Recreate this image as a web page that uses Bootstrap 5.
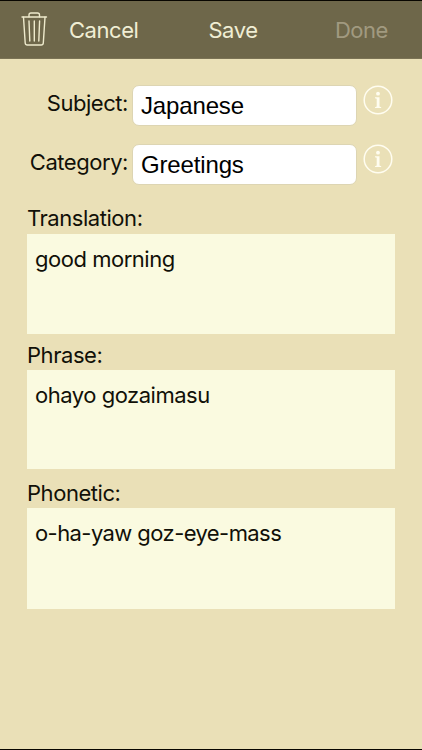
<!DOCTYPE html>
<html lang="en">
<head>
<meta charset="utf-8">
<meta name="viewport" content="width=device-width, initial-scale=1">
<title>Edit Phrase</title>
<link href="https://cdn.jsdelivr.net/npm/bootstrap@5.3.0/dist/css/bootstrap.min.css" rel="stylesheet">
<style>
body{background:#eae0b7;color:#111008;font-family:Inter,"Liberation Sans",sans-serif;font-size:22px;line-height:28px;letter-spacing:-.45px;height:750px;overflow:hidden;border-top:1px solid #080600;border-bottom:1px solid #080600}
.topbar{height:58px;background:#6e674a;border-bottom:1px solid #7b7355;padding:0 34px 0 21px}
.topbar .btn{--bs-btn-color:#f0eed4;--bs-btn-hover-color:#fff;--bs-btn-font-size:22px;--bs-btn-line-height:28px;--bs-btn-padding-x:0;--bs-btn-padding-y:0;--bs-btn-border-width:0;--bs-btn-disabled-color:#a19a80;--bs-btn-disabled-opacity:1;letter-spacing:-.45px}
.trash{width:27px;height:35px}
.b-cancel{margin-left:21px}
.b-save{margin-left:70px}
.b-done{margin-left:auto}
.fields{padding:26px 28px 0 0;gap:18px}
.field-label{width:129px;padding-right:1px;margin-right:3px;margin-top:4px}
.entry.form-control{width:225px;height:41px;border:1px solid #ddd5b3;border-radius:7px;padding:0 8px;font-family:"Liberation Sans",Arial,sans-serif;font-size:24px;line-height:38px;letter-spacing:-.15px;color:#000;background:#fff}
.info{width:30px;height:30px;margin-left:6px}
.notes{padding:19px 27px 0}
.note.form-control{background:#fafae0;color:#111008;font-size:22px;line-height:28px;letter-spacing:-.48px;padding:11px 8px;resize:none;overflow:hidden}
.n1{height:100px;margin-top:2px}
.n2{height:99px;margin-top:1px}
.note.n3{height:101px;margin-top:1px;letter-spacing:-.58px}
.l2{margin-top:7px}
.l3{margin-top:10px}
</style>
</head>
<body>
<nav class="topbar d-flex align-items-center">
  <button class="btn d-flex" type="button" aria-label="Delete">
    <svg class="trash" viewBox="0 0 27 35" fill="none" stroke="#eeeacc" stroke-width="1.4" stroke-linecap="round" stroke-linejoin="round"><path d="M1 5H25.500"/><path d="M8 4.800V3Q8 1 10 1H16.500Q18.500 1 18.500 3V4.800"/><path d="M2.500 5.200L4.200 31Q4.400 33 6.300 33H20.200Q22.100 33 22.300 31L24 5.200"/><path d="M8 9L8.800 29M13.300 9V29M18.600 9L17.800 29"/></svg>
  </button>
  <button class="btn b-cancel" type="button">Cancel</button>
  <button class="btn b-save" type="button">Save</button>
  <button class="btn b-done" type="button" disabled>Done</button>
</nav>
<main>
  <div class="fields d-flex flex-column">
    <div class="d-flex">
      <label class="field-label text-end flex-shrink-0" for="subject">Subject:</label>
      <input class="form-control entry flex-shrink-0" id="subject" value="Japanese">
      <svg class="info flex-shrink-0" viewBox="0 0 30 30"><circle cx="15" cy="15" r="13.800" fill="none" stroke="#fffdf0" stroke-width="1.500"/><circle cx="15" cy="8.700" r="1.900" fill="#fffdf0"/><path d="M12 12.300H16.500V21.500L18.200 22.200V23H12V22.200L13.700 21.500V13.700L12 13.200Z" fill="#fffdf0"/></svg>
    </div>
    <div class="d-flex">
      <label class="field-label text-end flex-shrink-0" for="category">Category:</label>
      <input class="form-control entry flex-shrink-0" id="category" value="Greetings">
      <svg class="info flex-shrink-0" viewBox="0 0 30 30"><circle cx="15" cy="15" r="13.800" fill="none" stroke="#fffdf0" stroke-width="1.500"/><circle cx="15" cy="8.700" r="1.900" fill="#fffdf0"/><path d="M12 12.300H16.500V21.500L18.200 22.200V23H12V22.200L13.700 21.500V13.700L12 13.200Z" fill="#fffdf0"/></svg>
    </div>
  </div>
  <div class="notes d-flex flex-column">
    <label for="translation">Translation:</label>
    <textarea class="form-control border-0 rounded-0 note n1" id="translation">good morning</textarea>
    <label class="l2" for="phrase">Phrase:</label>
    <textarea class="form-control border-0 rounded-0 note n2" id="phrase">ohayo gozaimasu</textarea>
    <label class="l3" for="phonetic">Phonetic:</label>
    <textarea class="form-control border-0 rounded-0 note n3" id="phonetic">o-ha-yaw goz-eye-mass</textarea>
  </div>
</main>
<script src="https://cdn.jsdelivr.net/npm/bootstrap@5.3.0/dist/js/bootstrap.bundle.min.js"></script>
</body>
</html>
